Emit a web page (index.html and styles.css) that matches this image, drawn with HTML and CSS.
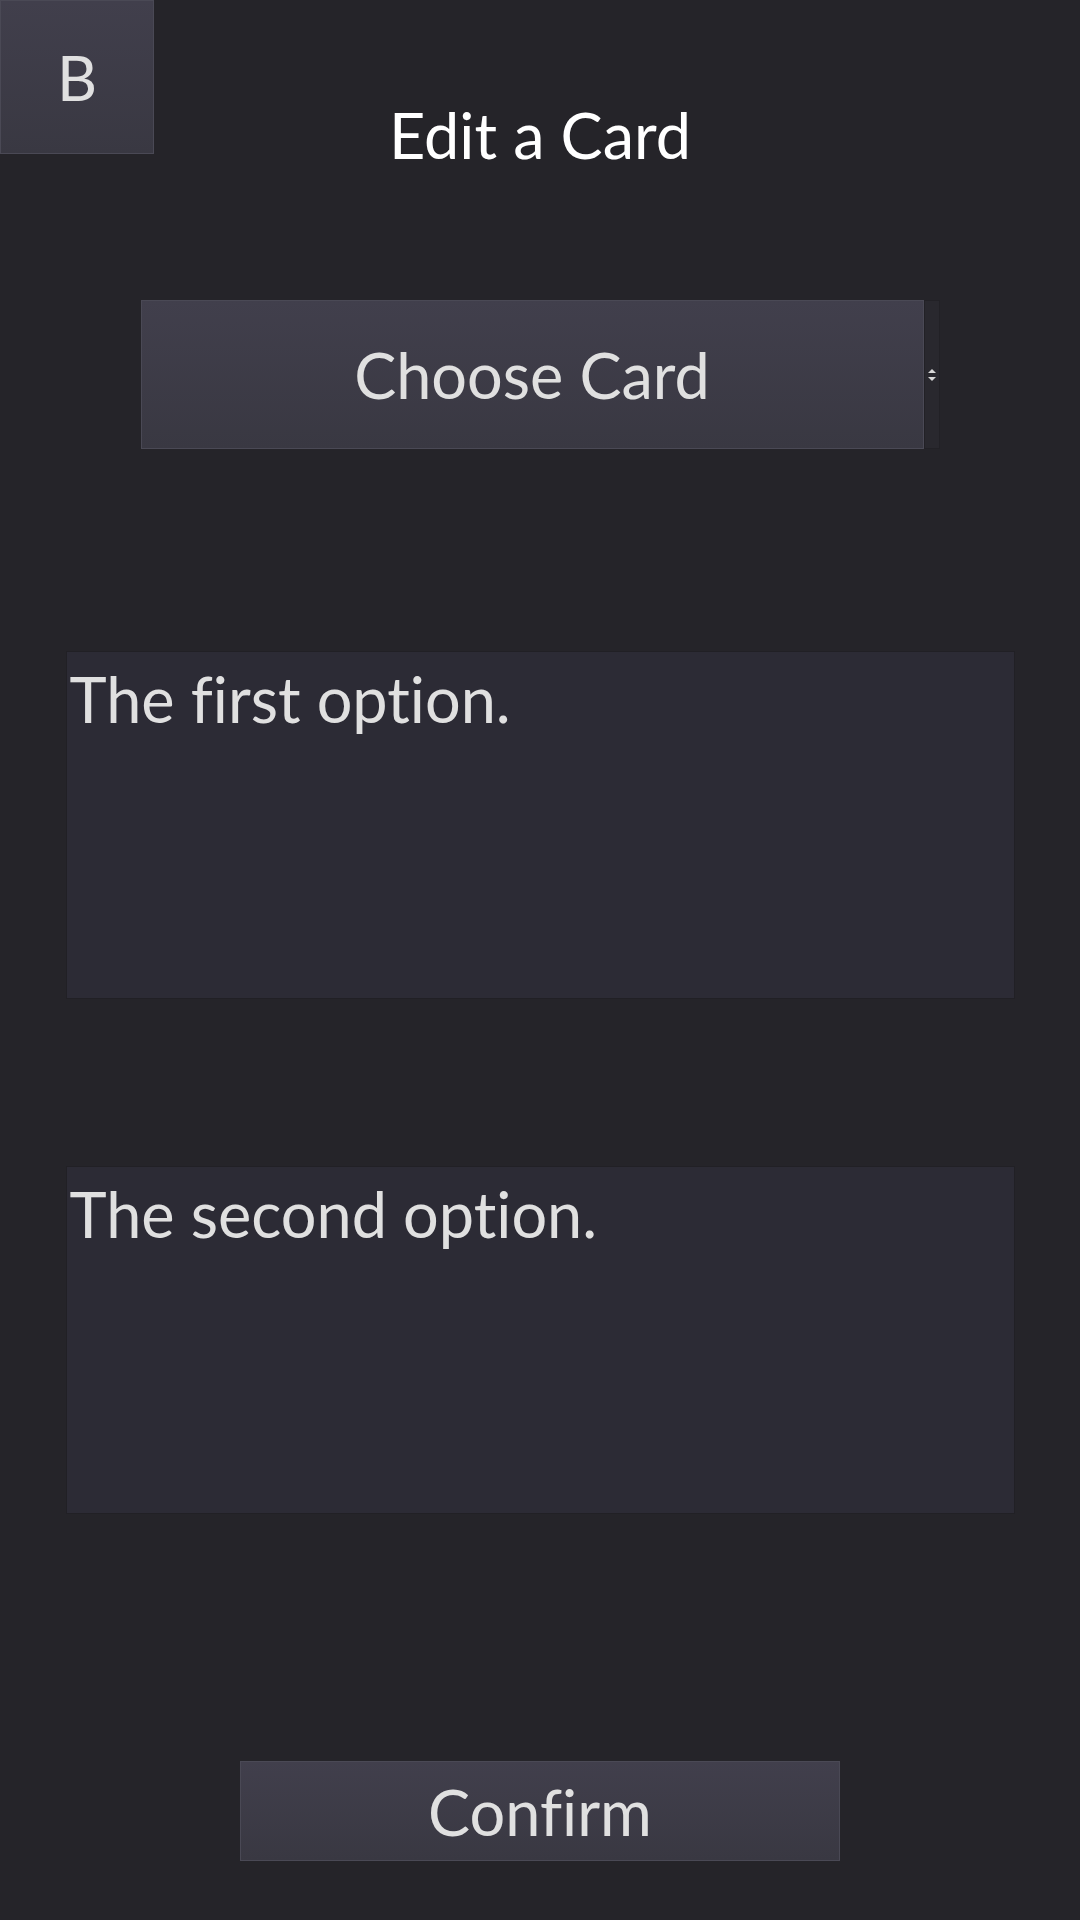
FILE: index.html
```html
<!DOCTYPE html>
<html>
<head>
<meta charset="utf-8">
<link rel="stylesheet" href="styles.css">
</head>
<body>
<div class="page">
  <header class="header">
    <button class="back-btn">B</button>
    <h1 class="title">Edit a Card</h1>
    <div class="spacer"></div>
  </header>
  <div class="chooser">
    <button class="choose-btn">Choose Card</button>
    <div class="scrollbar">
      <svg width="10" height="14" viewBox="0 0 10 14">
        <path d="M5 1 L9 5 H1 Z" fill="#d8d8d8"/>
        <path d="M5 13 L9 9 H1 Z" fill="#d8d8d8"/>
      </svg>
    </div>
  </div>
  <div class="textbox first">The first option.</div>
  <div class="textbox second">The second option.</div>
  <div class="footer">
    <button class="confirm-btn">Confirm</button>
  </div>
</div>
</body>
</html>
```
FILE: styles.css
```css
html, body {
  margin: 0;
  padding: 0;
  background: #252429;
  width: 1080px;
  height: 1920px;
  overflow: hidden;
}
.page {
  display: flex;
  flex-direction: column;
  align-items: center;
  font-family: Lato, "Noto Sans", sans-serif;
  font-variant-ligatures: none;
  color: #e0e0e0;
}
.header {
  width: 100%;
  display: grid;
  grid-template-columns: 154px 1fr 154px;
  height: 154px;
}
.back-btn {
  width: 154px;
  height: 154px;
  margin: 0;
  padding: 0;
  border: 1px solid #4a4955;
  background: linear-gradient(#413f4c, #393842);
  color: #e0e0e0;
  font-family: inherit;
  font-size: 62px;
}
.title {
  margin: 0;
  font-weight: 400;
  font-size: 63px;
  color: #ffffff;
  text-align: center;
  line-height: 76px;
  padding-top: 97px;
}
.chooser {
  display: flex;
  margin-top: 146px;
  height: 149px;
}
.choose-btn {
  width: 783px;
  height: 149px;
  margin: 0;
  border: 1px solid #4a4955;
  background: linear-gradient(#413f4c, #393842);
  color: #e0e0e0;
  font-family: inherit;
  font-variant-ligatures: none;
  font-size: 63px;
  padding: 0;
}
.scrollbar {
  width: 16px;
  height: 149px;
  box-sizing: border-box;
  background: #29282e;
  border: 1px solid #222126;
  display: flex;
  align-items: center;
  justify-content: center;
}
.textbox {
  width: 949px;
  height: 348px;
  box-sizing: border-box;
  background: #2c2b35;
  border: 1px solid #212025;
  font-size: 63px;
  line-height: 76px;
  padding: 9px 3px;
}
.first { margin-top: 202px; }
.second { margin-top: 167px; }
.footer {
  margin-top: 247px;
}
.confirm-btn {
  width: 600px;
  height: 100px;
  margin: 0;
  padding: 0;
  border: 1px solid #4a4955;
  background: linear-gradient(#413f4c, #393842);
  color: #e0e0e0;
  font-family: inherit;
  font-variant-ligatures: none;
  font-size: 63px;
}
```
